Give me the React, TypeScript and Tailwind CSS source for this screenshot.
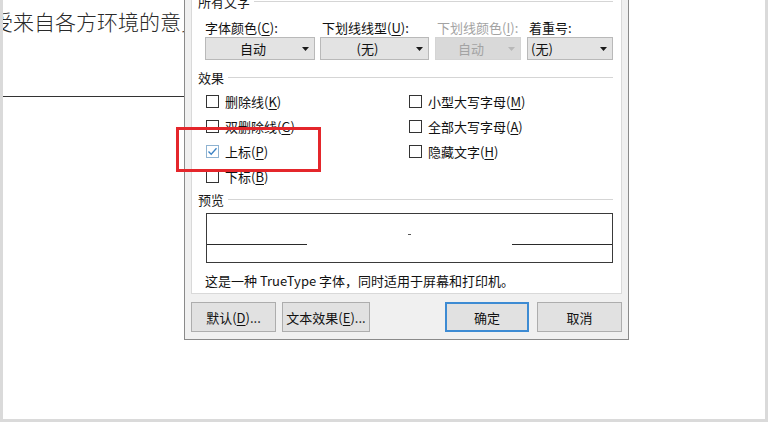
import React from "react";

const ui = "font-['Noto_Sans_CJK_SC','Noto_Sans',sans-serif]";

// label text with an underlined access key, e.g. 删除线(K)
const Acc = ({ text, k, colon = false }: { text: string; k: string; colon?: boolean }) => (
  <span>
    {text}(<span className="underline underline-offset-2">{k}</span>){colon ? ":" : ""}
  </span>
);

const Caret = ({ color = "#1a1a1a" }: { color?: string }) => (
  <svg width="7" height="4" viewBox="0 0 7 4">
    <path d="M0 0H7L3.5 4Z" fill={color} />
  </svg>
);

const GroupHeader = ({ title }: { title: string }) => (
  <div className="flex h-[18px] items-center pl-[6px] pr-[8px]">
    <span className="text-[13px] leading-none text-[#1a1a1a]">{title}</span>
    <div className="ml-[4px] h-px flex-1 bg-[#d5d5d5]" />
  </div>
);

const Dropdown = ({ value, className, left = false, disabled = false }: { value: string; className: string; left?: boolean; disabled?: boolean }) => (
  <div
    className={`flex h-[23px] items-center border ${
      disabled ? "border-[#d4d4d4] bg-[#d9d9d9] text-[#a3a3a3]" : "border-[#b9b9b9] bg-[#e3e3e3] text-[#111]"
    } ${className}`}
  >
    <span className={`flex-1 text-[13px] leading-none ${left ? "pl-[3px] text-left" : "pl-[2px] text-center"}`}>{value}</span>
    <span className="flex w-[16px] justify-center pr-[2px]">
      <Caret color={disabled ? "#b8b8b8" : "#1a1a1a"} />
    </span>
  </div>
);

const Check = ({ checked = false, children }: { checked?: boolean; children: React.ReactNode }) => (
  <div className="flex h-[25px] items-center">
    <span
      className={`flex h-[13px] w-[13px] items-center justify-center border bg-white ${
        checked ? "border-[#8fb3d1]" : "border-[#333]"
      }`}
    >
      {checked && (
        <svg width="11" height="11" viewBox="0 0 11 11">
          <path d="M1.5 5.5L4.2 8.3L9.5 2.3" fill="none" stroke="#3b82c4" strokeWidth="1.3" />
        </svg>
      )}
    </span>
    <span className="ml-[6px] text-[13px] leading-none text-[#111]">{children}</span>
  </div>
);

const Button = ({ children, className, primary = false }: { children: React.ReactNode; className: string; primary?: boolean }) => (
  <button
    className={`flex h-[30px] items-center justify-center bg-[#e1e1e1] text-[13px] leading-none text-[#111] ${
      primary ? "border-2 border-[#3d8bd3]" : "border border-[#adadad]"
    } ${className}`}
  >
    {children}
  </button>
);

const FontDialog = () => (
  <div className={`absolute left-[181px] top-[-20px] w-[445px] border border-[#8a8a8a] bg-[#f0f0f0] px-[6px] pt-[6px] pb-[7px] ${ui}`}>
    <div className="border border-[#d9d9d9] bg-white pt-[4px] pb-[4px]">
      <GroupHeader title="所有文字" />

      <div className="mt-[9px] flex h-[16px] items-center pl-[13px] text-[13px] leading-none">
        <span className="w-[110px] text-[#111]"><Acc text="字体颜色" k="C" colon /></span>
        <span className="ml-[7px] w-[109px] text-[#111]"><Acc text="下划线线型" k="U" colon /></span>
        <span className="ml-[6px] w-[86px] text-[#a3a3a3]"><Acc text="下划线颜色" k="I" colon /></span>
        <span className="ml-[6px] w-[86px] text-[#111]">着重号:</span>
      </div>

      <div className="mt-[2px] flex pl-[13px]">
        <Dropdown value="自动" className="w-[110px]" />
        <Dropdown value="(无)" className="ml-[5px] w-[109px]" />
        <Dropdown value="自动" className="ml-[6px] w-[86px]" disabled />
        <Dropdown value="(无)" className="ml-[6px] w-[86px]" left />
      </div>

      <div className="mt-[8px]">
        <GroupHeader title="效果" />
      </div>

      <div className="mt-[3px] flex pl-[14px]">
        <div className="w-[203px]">
          <Check><Acc text="删除线" k="K" /></Check>
          <Check><Acc text="双删除线" k="G" /></Check>
          <Check checked><Acc text="上标" k="P" /></Check>
          <Check><Acc text="下标" k="B" /></Check>
        </div>
        <div>
          <Check><Acc text="小型大写字母" k="M" /></Check>
          <Check><Acc text="全部大写字母" k="A" /></Check>
          <Check><Acc text="隐藏文字" k="H" /></Check>
        </div>
      </div>

      <div className="mt-[1px]">
        <GroupHeader title="预览" />
      </div>

      <div className="mt-[5px] ml-[14px] mr-[8px] flex h-[50px] items-start border border-[#3a3a3a] pt-[30px]">
        <div className="h-px w-[100px] bg-[#2a2a2a]" />
        <div className="flex flex-1 justify-center">
          <div className="-mt-[10px] h-px w-[3px] bg-[#555]" />
        </div>
        <div className="h-px w-[100px] bg-[#2a2a2a]" />
      </div>

      <p className="mt-[8px] flex h-[18px] items-center pl-[13px] text-[13px] leading-none text-[#111]">
        这是一种 TrueType 字体，同时适用于屏幕和打印机。
      </p>
    </div>

    <div className="mt-[8px] flex items-center justify-between">
      <div className="flex gap-[6px]">
        <Button className="w-[85px]">
          默认(<span className="underline underline-offset-2">D</span>)...
        </Button>
        <Button className="w-[88px]">
          文本效果(<span className="underline underline-offset-2">E</span>)...
        </Button>
      </div>
      <div className="flex gap-[8px]">
        <Button className="w-[84px]" primary>确定</Button>
        <Button className="w-[85px]">取消</Button>
      </div>
    </div>
  </div>
);

export default function App() {
  return (
    <div className="relative h-[422px] w-[768px] overflow-hidden border-x-[3px] border-b-[3px] border-[#dadada] bg-white">
      <p className="-ml-[11px] mt-[11px] whitespace-nowrap text-[21px] font-light leading-none text-[#2a2a2a] font-['Noto_Sans_CJK_SC',serif]">
        受来自各方环境的意见
      </p>
      <div className="mt-[64px] h-px w-[190px] bg-[#333]" />

      <FontDialog />

      <div className="absolute left-[173px] top-[127px] h-[45px] w-[145px] border-[3px] border-[#e4262b]" />
    </div>
  );
}
